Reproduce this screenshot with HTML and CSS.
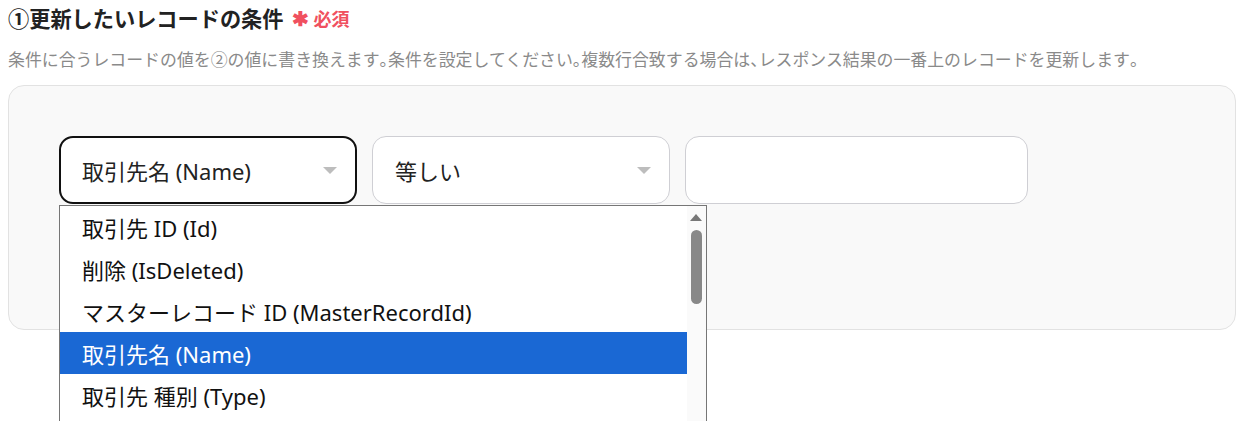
FILE: index.html
```html
<!DOCTYPE html>
<html lang="ja">
<head>
<meta charset="utf-8">
<link rel="stylesheet" href="styles.css">
</head>
<body>
<div class="page">
  <h2 class="title">①更新したいレコードの条件<span class="req"><span class="star">✱</span>必須</span></h2>
  <p class="desc">条件に合うレコードの値を②の値に書き換えます<span class="p">。</span>条件を設定してください<span class="p">。</span>複数行合致する場合は<span class="p">、</span>レスポンス結果の一番上のレコードを更新します<span class="p">。</span></p>
  <div class="panel">
    <div class="row">
      <div class="field">
        <div class="select active">
          <span class="label">取引先名 (Name)</span>
          <span class="caret"></span>
        </div>
        <div class="listbox">
          <ul class="options">
            <li>取引先 ID (Id)</li>
            <li>削除 (IsDeleted)</li>
            <li>マスターレコード ID (MasterRecordId)</li>
            <li class="selected">取引先名 (Name)</li>
            <li>取引先 種別 (Type)</li>
          </ul>
          <div class="scrollbar">
            <span class="arrow"></span>
            <span class="thumb"></span>
          </div>
        </div>
      </div>
      <div class="select">
        <span class="label">等しい</span>
        <span class="caret"></span>
      </div>
      <div class="input"></div>
    </div>
  </div>
</div>
</body>
</html>
```
FILE: styles.css
```css
* { box-sizing: border-box; }
html, body { margin: 0; padding: 0; background: #fff; }
body {
  font-family: "Noto Sans", "Noto Sans CJK JP", sans-serif;
  color: #222;
  overflow: hidden;
  height: 421px;
}
.page { padding: 0 6px 0 8px; }
.title {
  margin: 0;
  padding-top: 5px;
  font-size: 21.2px;
  line-height: 28px;
  font-weight: 700;
  color: #222;
  display: flex;
  align-items: center;
}
.req {
  margin-left: 9px;
  font-size: 18px;
  font-weight: 700;
  color: #f0505f;
  display: inline-flex;
  align-items: center;
}
.star { font-size: 20px; margin-right: 4px; }
.desc {
  margin: 0;
  padding-top: 16px;
  font-size: 16.9px;
  line-height: 22px;
  color: #8a8a8a;
}
.desc .p { font-feature-settings: "halt"; }
.panel {
  margin-top: 14px;
  height: 245px;
  background: #f9f9f9;
  border: 1px solid #e2e2e2;
  border-radius: 16px;
  padding: 50px 50px;
}
.row { display: flex; gap: 15px; }
.field { position: relative; }
.select {
  width: 298px;
  height: 68px;
  background: #fff;
  border: 1px solid #cfcfd4;
  border-radius: 14px;
  display: flex;
  align-items: center;
  padding: 0 18px 0 22px;
  font-size: 22px;
  color: #222;
}
.select.active { border: 2px solid #111; padding-left: 21px; }
.label { flex: 1; }
.caret {
  width: 0; height: 0;
  border-left: 7px solid transparent;
  border-right: 7px solid transparent;
  border-top: 7px solid #bdbdbd;
}
.input {
  width: 343px;
  height: 68px;
  background: #fff;
  border: 1px solid #cfcfd4;
  border-radius: 14px;
}
.listbox {
  position: absolute;
  top: 69px;
  left: 0;
  width: 648px;
  height: 230px;
  background: #fff;
  border: 1px solid #767676;
  border-bottom: none;
  display: flex;
}
.options {
  list-style: none;
  margin: 0;
  padding: 0;
  flex: 1;
}
.options li {
  height: 42px;
  line-height: 44px;
  padding-left: 22px;
  font-size: 22px;
  color: #111;
  white-space: nowrap;
}
.options li.selected { background: #1a68d4; color: #fff; }
.scrollbar {
  width: 19px;
  background: #fafafa;
  position: relative;
}
.arrow {
  position: absolute;
  top: 8px; left: 3px;
  width: 0; height: 0;
  border-left: 6px solid transparent;
  border-right: 6px solid transparent;
  border-bottom: 7px solid #777;
}
.thumb {
  position: absolute;
  top: 24px; left: 4px;
  width: 11px; height: 74px;
  border-radius: 6px;
  background: #888;
}
```
